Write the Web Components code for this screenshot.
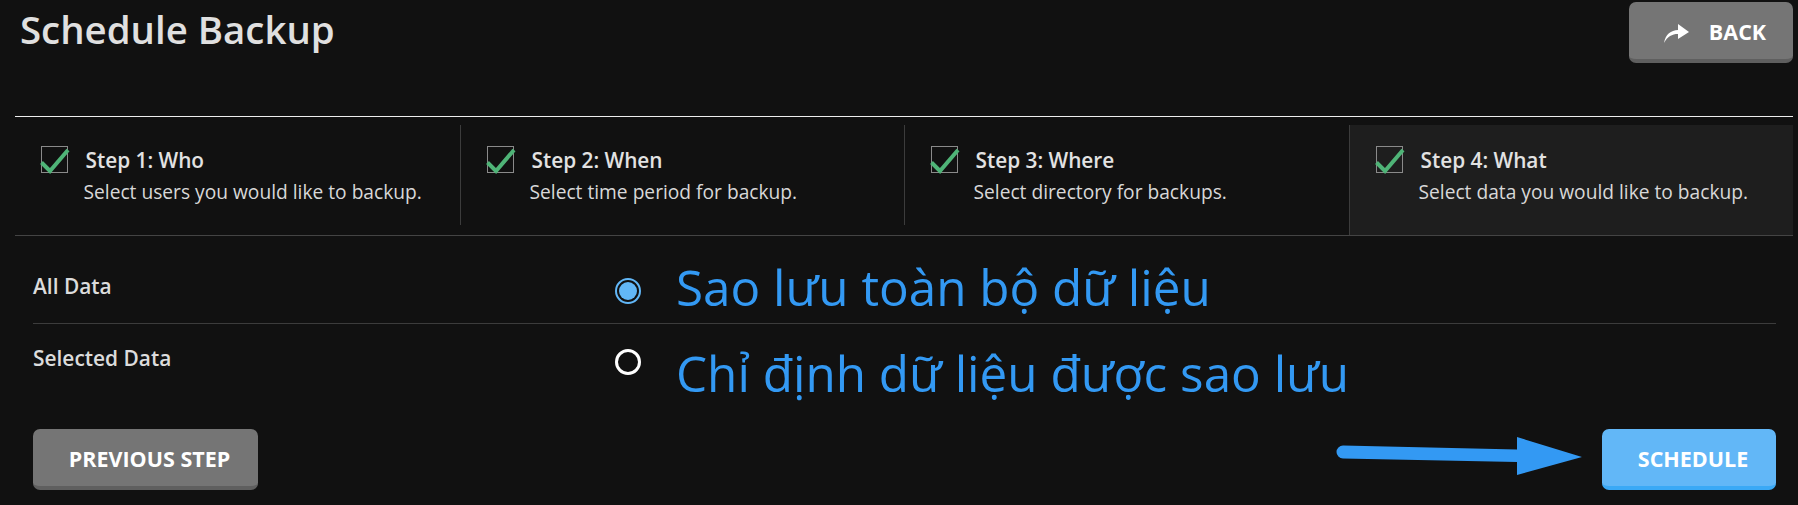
<!DOCTYPE html>
<html lang="en">
<head>
<meta charset="utf-8">
<title>Schedule Backup</title>
<style>
  html, body { margin: 0; background: #111; overflow: hidden; }
  body { font-family: "Open Sans", "Noto Sans", sans-serif; color: #ddd; }
</style>
</head>
<body>
<template id="app-button-tpl">
  <style>
    :host { display: inline-flex; }
    .btn {
      display: flex; align-items: center; justify-content: center; gap: 20px;
      box-sizing: border-box; height: 61px; padding: 2px 0 0 8px;
      width: var(--w, auto);
      background: #757575; border-bottom: 4px solid #5f5f5f; border-radius: 7px;
      color: #fff; font-size: 21.5px; font-weight: 700; white-space: nowrap;
    }
    :host([primary]) .btn { background: #62b7f7; border-bottom-color: #3aa9f6; }
    ::slotted(svg) { display: block; margin-top: 3px; }
  </style>
  <div class="btn"><slot name="icon"></slot><slot></slot></div>
</template>

<template id="step-item-tpl">
  <style>
    :host { display: block; box-sizing: border-box; height: 110px; padding: 0 0 10px; }
    :host([active]) { background: #1e1e1e; padding-bottom: 0; }
    .inner {
      box-sizing: border-box; height: 100%;
      border-left: 1px solid #3c3c3c; padding: 21px 0 0 var(--indent, 26px);
      display: grid; grid-template-columns: 27px 1fr; column-gap: 17.5px; align-content: start;
    }
    :host([first]) .inner { border-left: 0; }
    .box { width: 27px; height: 27px; box-sizing: border-box; border: 1px solid #8a8a8a; position: relative; }
    .box svg { position: absolute; left: -2px; top: 1px; }
    .title { font-size: 20.8px; font-weight: 600; color: #e2e2e2; line-height: 27px; margin-top: 1px; }
    .desc { grid-column: 2; margin-left: -2px; margin-top: 5px; font-size: 19.2px; color: #d8d8d8; line-height: 26px; white-space: nowrap; }
  </style>
  <div class="inner">
    <div class="box"><svg width="30" height="26" viewBox="0 0 30 26"><path d="M1.5 14.5 L10 23 L28 2" fill="none" stroke="#4fb477" stroke-width="4"/></svg></div>
    <div class="title"><slot name="title"></slot></div>
    <div class="desc"><slot></slot></div>
  </div>
</template>

<template id="step-bar-tpl">
  <style>
    :host {
      display: grid; grid-template-columns: 445px 444px 445px 444px;
      margin-top: 8px; border-bottom: 1px solid #444; height: 110px;
    }
  </style>
  <slot></slot>
</template>

<template id="option-row-tpl">
  <style>
    :host {
      display: grid; grid-template-columns: 582px 1fr; align-items: start;
      font-size: 20.9px; font-weight: 600; color: #dcdcdc;
    }
    :host([divider]) { border-bottom: 1px solid #3c3c3c; }
    .radio { width: 26px; height: 26px; box-sizing: border-box; border-radius: 50%; border: 3px solid #fff; }
    :host([checked]) .radio {
      border: 2px solid #62b7f7; padding: 2px; background: #62b7f7 content-box;
    }
    .label { line-height: 26px; margin-top: -5px; }
    :host(:not([divider])) .label { margin-top: -4px; }
  </style>
  <div class="label"><slot></slot></div>
  <div class="radio"></div>
</template>

<template id="backup-page-tpl">
  <style>
    :host { display: block; position: relative; width: 1798px; height: 505px; box-sizing: border-box; padding: 2px 5px 0 15px; overflow: hidden; }
    header { display: flex; justify-content: space-between; align-items: flex-start; height: 114px; border-bottom: 1px solid #eee; }
    h1 { margin: 0; padding: 2px 0 0 5px; font-size: 38.4px; font-weight: 600; line-height: 50px; color: #e0e0e0; }
    .options { margin: 0 17px 0 18px; }
    .options option-row:nth-child(1) { height: 88px; padding-top: 42px; box-sizing: border-box; }
    .options option-row:nth-child(2) { height: 105px; padding-top: 25px; box-sizing: border-box; }
    footer { margin: 0 17px 0 18px; display: flex; justify-content: space-between; }
    .note { position: absolute; left: 676px; margin: 0; color: #3399f3; font-size: 49.4px; line-height: 60px; white-space: nowrap; }
    .note.a { top: 257px; }
    .note.b { top: 343px; }
    .arrow { position: absolute; left: 1330px; top: 430px; }
  </style>
  <header>
    <h1>Schedule Backup</h1>
    <app-button style="--w:164px">
      <svg slot="icon" width="25" height="19" viewBox="0 0 25 19"><path d="M0 19 C1.5 10 7 6.5 14 6 L14 0 L25 8 L14 15 L14 10 C8 10 3.5 12.5 0 19 Z" fill="#fff"/></svg>
      BACK
    </app-button>
  </header>
  <step-bar>
    <step-item first style="--indent:26px"><span slot="title">Step 1: Who</span>Select users you would like to backup.</step-item>
    <step-item><span slot="title">Step 2: When</span>Select time period for backup.</step-item>
    <step-item><span slot="title">Step 3: Where</span>Select directory for backups.</step-item>
    <step-item active><span slot="title">Step 4: What</span>Select data you would like to backup.</step-item>
  </step-bar>
  <div class="options">
    <option-row divider checked>All Data</option-row>
    <option-row>Selected Data</option-row>
  </div>
  <footer>
    <app-button style="--w:225px">PREVIOUS STEP</app-button>
    <app-button primary style="--w:174px">SCHEDULE</app-button>
  </footer>
  <p class="note a">Sao lưu toàn bộ dữ liệu</p>
  <p class="note b">Chỉ định dữ liệu được sao lưu</p>
  <svg class="arrow" width="260" height="50" viewBox="0 0 260 50">
    <path d="M13 15.5 L187 19.5 L187 7 L252 27 L187 45 L187 32 L13 28.5 A6.5 6.5 0 0 1 13 15.5 Z" fill="#3399f3"/>
  </svg>
</template>

<backup-page></backup-page>

<script>
  function define(name) {
    const tpl = document.getElementById(name + '-tpl');
    customElements.define(name, class extends HTMLElement {
      constructor() {
        super();
        this.attachShadow({ mode: 'open' }).appendChild(tpl.content.cloneNode(true));
      }
    });
  }
  ['app-button', 'step-item', 'step-bar', 'option-row', 'backup-page'].forEach(define);
</script>
</body>
</html>
